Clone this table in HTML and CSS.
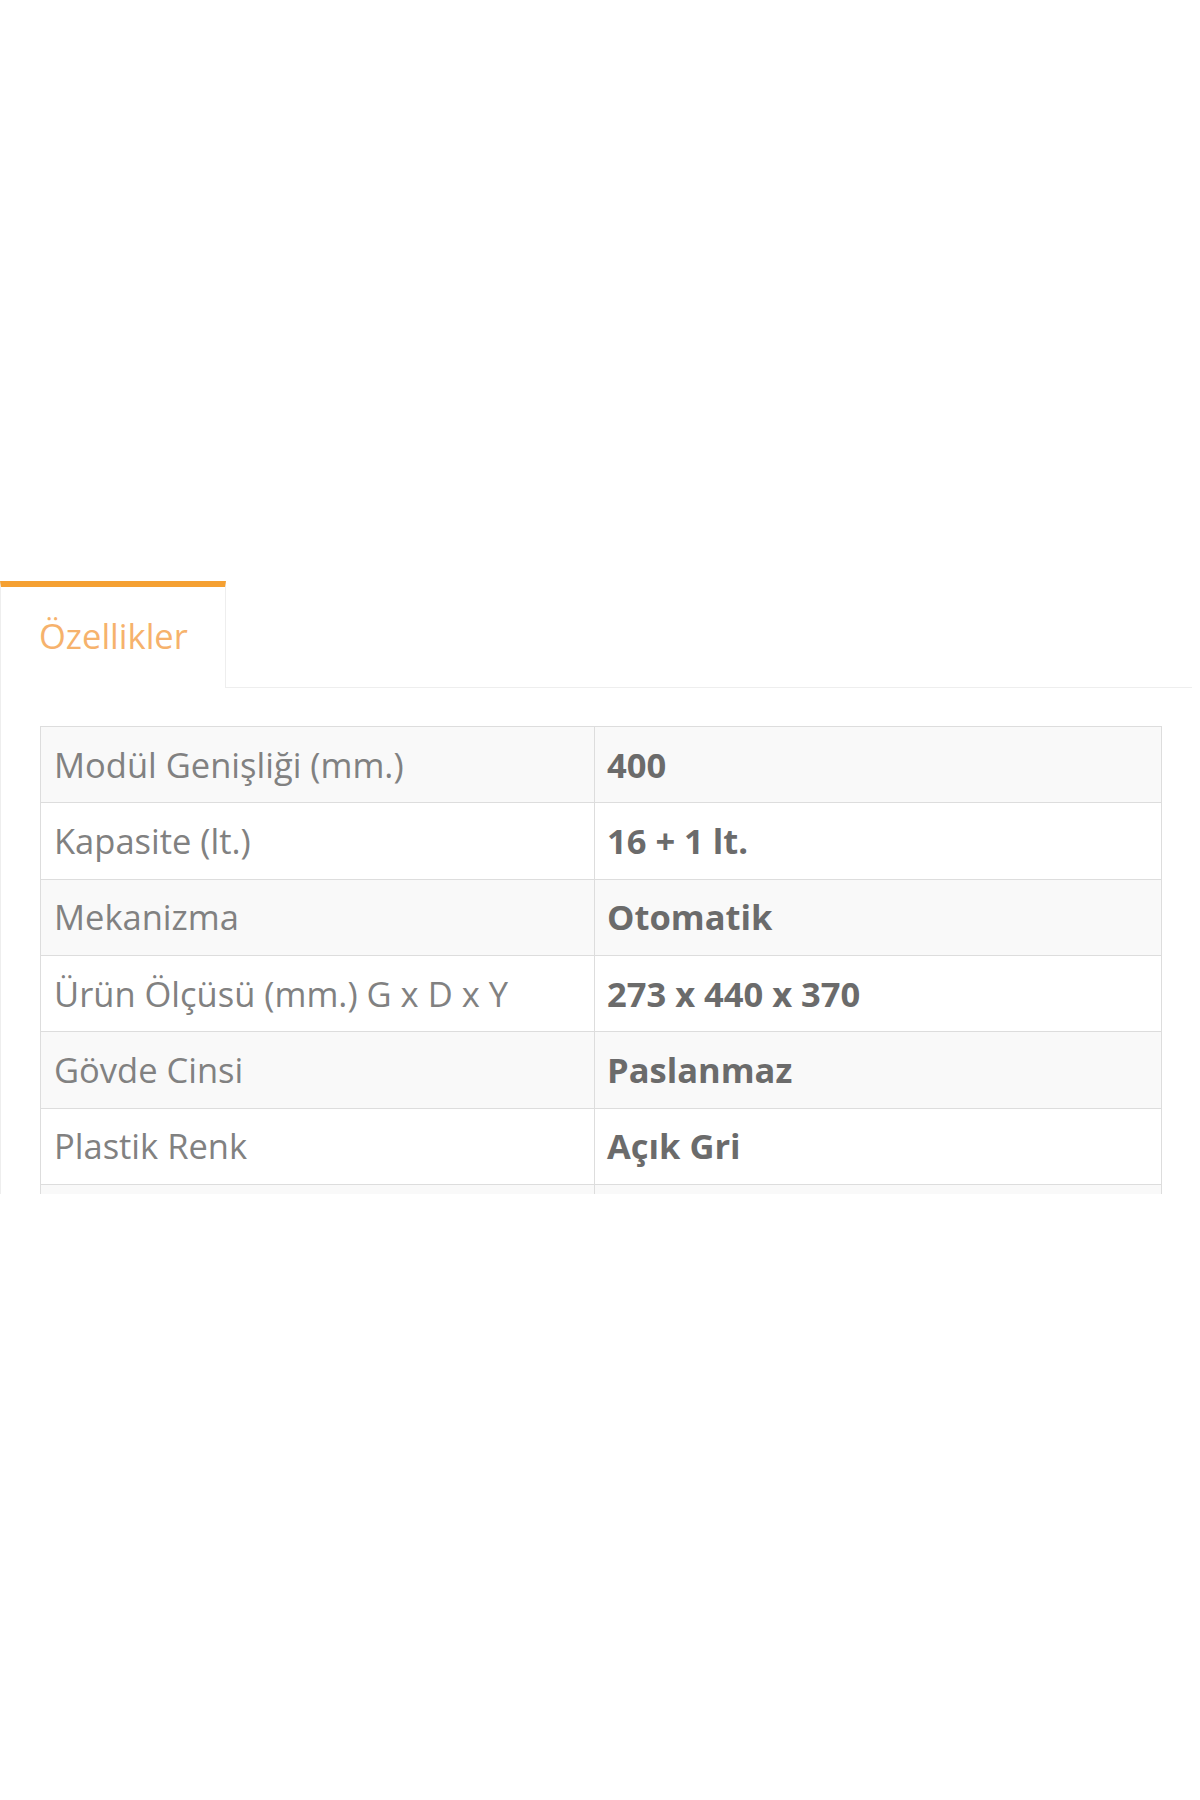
FILE: index.html
```html
<!DOCTYPE html>
<html lang="tr">
<head>
<meta charset="utf-8">
<title>Özellikler</title>
<link rel="stylesheet" href="styles.css">
</head>
<body>
<div class="page">
  <div class="tabs">
    <ul class="tab-nav">
      <li class="tab active">Özellikler</li>
      <li class="tab-rest"></li>
    </ul>
    <div class="tab-panel">
      <table class="specs">
        <colgroup><col class="c-label"><col class="c-value"></colgroup>
        <tbody>
          <tr><td>Modül Genişliği (mm.)</td><td class="val">400</td></tr>
          <tr><td>Kapasite (lt.)</td><td class="val">16 + 1 lt.</td></tr>
          <tr><td>Mekanizma</td><td class="val">Otomatik</td></tr>
          <tr><td>Ürün Ölçüsü (mm.) G x D x Y</td><td class="val">273 x 440 x 370</td></tr>
          <tr><td>Gövde Cinsi</td><td class="val">Paslanmaz</td></tr>
          <tr><td>Plastik Renk</td><td class="val">Açık Gri</td></tr>
          <tr><td>&nbsp;</td><td class="val">&nbsp;</td></tr>
        </tbody>
      </table>
    </div>
  </div>
</div>
</body>
</html>
```
FILE: styles.css
```css
html, body {
  margin: 0;
  padding: 0;
  background: #ffffff;
}
body {
  font-family: "Open Sans", "DejaVu Sans", sans-serif;
}
.page {
  padding-top: 581px;
  height: 613px;
  overflow: hidden;
  width: 1192px;
}
.tabs {
  display: flex;
  flex-direction: column;
}
.tab-nav {
  list-style: none;
  margin: 0;
  padding: 0;
  display: flex;
  height: 107px;
}
.tab {
  box-sizing: border-box;
  width: 226px;
  height: 107px;
  border-top: 6px solid #f5a032;
  border-left: 1px solid #eeeeee;
  border-right: 1px solid #eeeeee;
  background: #ffffff;
  color: #f6b26c;
  font-size: 34.5px;
  padding: 26px 0 0 38px;
  line-height: 46px;
}
.tab-rest {
  flex: 1;
  border-bottom: 1px solid #eeeeee;
}
.tab-panel {
  border-left: 1px solid #eeeeee;
  padding: 38px 30px 0 39px;
}
.specs {
  width: 1122px;
  border-collapse: collapse;
  border: 1px solid #dddddd;
  font-size: 34.5px;
  color: #818181;
}
.c-label { width: 554px; }
.specs td {
  border: 1px solid #dddddd;
  height: 76.33px;
  box-sizing: border-box;
  padding: 0 12px 0 13px;
  line-height: 46px;
  vertical-align: middle;
  white-space: nowrap;
}
.specs tr:nth-child(odd) td {
  background: #f9f9f9;
}
.specs td.val {
  font-weight: 700;
  color: #6b6b6b;
  padding-left: 12px;
}
```
